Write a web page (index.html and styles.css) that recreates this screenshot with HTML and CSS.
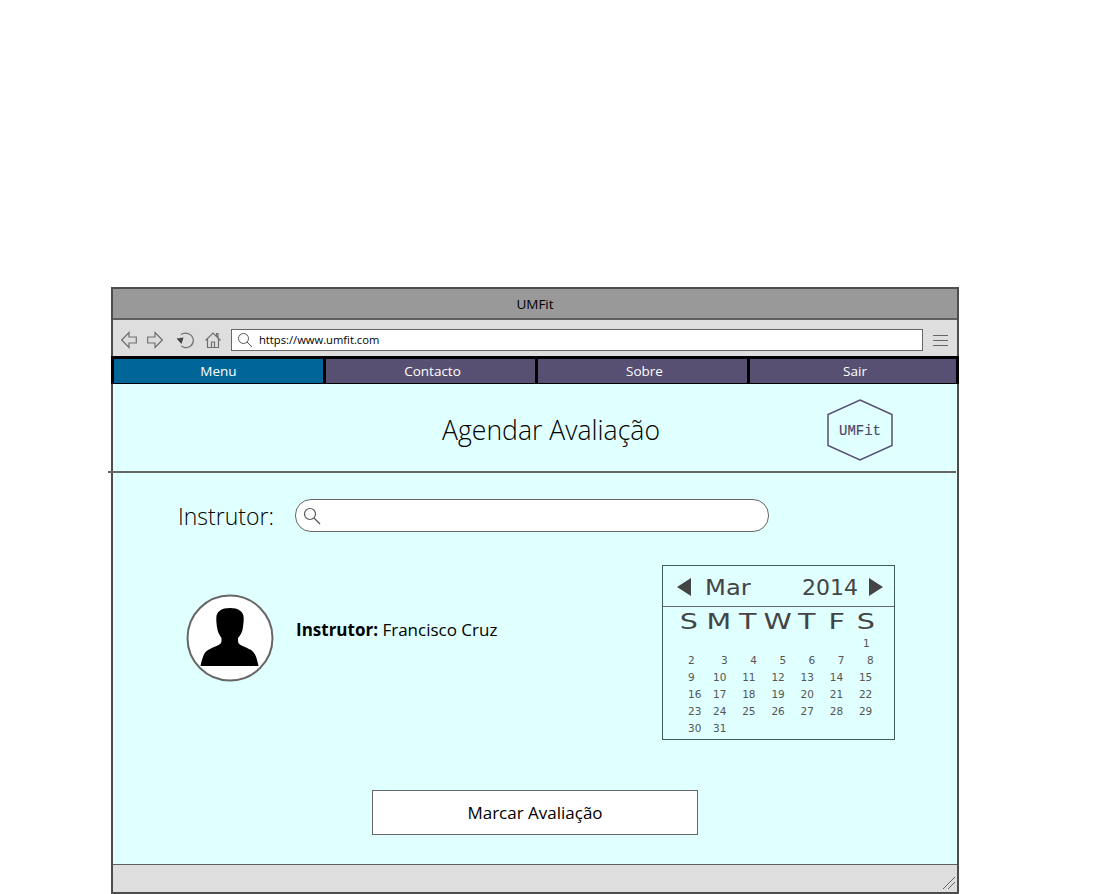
FILE: index.html
```html
<!DOCTYPE html>
<html lang="pt">

<head>
  <meta charset="utf-8" />
  <title>UMFit</title>
  <link rel="stylesheet" href="styles.css">
</head>

<body>
  <div class="window">
    <div class="titlebar">UMFit</div>

    <div class="toolbar">
      <svg class="tool" width="16" height="18" viewBox="0 0 16 18"><path d="M0.700 9 L8 1.500 V6 H15.300 V12 H8 V16.500 Z" /></svg>
      <svg class="tool" width="16" height="18" viewBox="0 0 16 18"><path d="M15.300 9 L8 1.500 V6 H0.700 V12 H8 V16.500 Z" /></svg>
      <svg class="tool reload" width="18" height="18" viewBox="0 0 18 18">
        <path d="M5 3.500 C10 0 17.300 3.500 17.300 9.500 C17.300 14.500 12.500 17.500 8 16.300 C7 16 6 15.500 5.300 14.800" />
        <path class="solid" d="M0.500 7.500 L7.500 6.500 L5.500 13 Z" />
      </svg>
      <svg class="tool" width="16" height="18" viewBox="0 0 16 18">
        <path d="M0.500 9.500 L8 2 L15.500 9.500 M2.500 8 V16.500 H13.500 V8 M6.500 16.500 V11 H9.500 V16.500 M11.500 5 V2.500 H13 V6.500" />
      </svg>
      <div class="address">
        <svg width="16" height="16" viewBox="0 0 16 16"><circle cx="6.500" cy="6.500" r="5" /><path d="M10 10 L15 15" /></svg>
        <span>https://www.umfit.com</span>
      </div>
      <div class="burger"><i></i><i></i><i></i></div>
    </div>

    <nav class="nav">
      <a class="active">Menu</a>
      <a>Contacto</a>
      <a>Sobre</a>
      <a>Sair</a>
    </nav>

    <main class="page">
      <header class="page-head">
        <h1>Agendar Avaliação</h1>
        <div class="logo">
          <svg width="66" height="62" viewBox="0 0 66 62"><path d="M33 1 L65 15.500 V46.500 L33 61 L1 46.500 V15.500 Z" /></svg>
          <span>UMFit</span>
        </div>
      </header>
      <hr class="rule">

      <div class="search-row">
        <label>Instrutor:</label>
        <div class="search">
          <svg width="18" height="18" viewBox="0 0 18 18"><circle cx="7" cy="7" r="5.500" /><path d="M11 11 L17 17" /></svg>
        </div>
      </div>

      <section class="detail">
        <svg class="avatar" width="88" height="88" viewBox="0 0 88 88">
          <circle cx="44" cy="44" r="42.500" />
          <path class="person" d="M44 14 C36 14 30.500 17 30.300 24 C30.200 28 31 33 31 33 C31.500 38 33.500 41 35.500 44 L35.500 47 C35.500 51 30 52 25 54.500 C19 57 17.500 59 14.500 72 L72.500 72 C70 60 68 57 62 54.500 C57 52 52 51 52 47 L52 44 C54.500 41 56.500 38 57 33 C57 33 57.800 28 57.700 24 C57.500 17 52 14 44 14 Z" />
        </svg>
        <p class="name"><b>Instrutor:</b> Francisco Cruz</p>

        <div class="calendar">
          <div class="cal-head">
            <i class="arrow left"></i>
            <span class="month">Mar</span>
            <span class="year">2014</span>
            <i class="arrow right"></i>
          </div>
          <div class="weekdays">
            <span>S</span><span>M</span><span>T</span><span>W</span><span>T</span><span>F</span><span>S</span>
          </div>
          <div class="days">
            <span class="first">1</span>
            <span>2</span><span class="pad">3</span><span class="pad">4</span><span class="pad">5</span><span class="pad">6</span><span class="pad">7</span><span class="pad">8</span>
            <span>9</span><span>10</span><span>11</span><span>12</span><span>13</span><span>14</span><span>15</span>
            <span>16</span><span>17</span><span>18</span><span>19</span><span>20</span><span>21</span><span>22</span>
            <span>23</span><span>24</span><span>25</span><span>26</span><span>27</span><span>28</span><span>29</span>
            <span>30</span><span>31</span>
          </div>
        </div>
      </section>

      <button class="book" type="button">Marcar Avaliação</button>
    </main>

    <footer class="statusbar">
      <svg width="14" height="14" viewBox="0 0 14 14"><path d="M1 13 L13 1 M6 13 L13 6" /></svg>
    </footer>
  </div>
</body>

</html>
```

FILE: styles.css
```css
body {
  margin: 0;
  padding: 287px 0 0 111px;
  background: #fff;
  font-family: "Open Sans", "Noto Sans", sans-serif;
  color: #000;
  overflow: hidden;
}

.window {
  box-sizing: border-box;
  width: 848px;
  height: 607px;
  border: 2px solid #4d4d4d;
  display: flex;
  flex-direction: column;
}

.titlebar {
  box-sizing: border-box;
  height: 31px;
  flex: none;
  line-height: 31px;
  background: #999;
  border-bottom: 2px solid #5f5f5f;
  text-align: center;
  font-size: 13.500px;
}

.toolbar {
  box-sizing: border-box;
  height: 36px;
  flex: none;
  padding-top: 4px;
  background: #dedede;
  display: flex;
  align-items: center;
}

.tool {
  flex: none;
  margin-left: 10px;
}

.tool:first-child {
  margin-left: 8px;
}

.tool path {
  fill: none;
  stroke: #707070;
  stroke-width: 1.200;
}

.reload {
  margin-left: 13px;
  margin-right: 1px;
}

.tool .solid {
  fill: #444;
  stroke: none;
}

.address {
  box-sizing: border-box;
  width: 692px;
  height: 22px;
  margin-left: 10px;
  background: #fff;
  border: 1px solid #666;
  display: flex;
  align-items: center;
  gap: 6px;
  padding-left: 5px;
  font-size: 11.200px;
}

.address span {
  margin-top: -2px;
}

.address path,
.address circle {
  fill: none;
  stroke: #555;
  stroke-width: 1;
}

.burger {
  margin-left: 10px;
  width: 15px;
  display: flex;
  flex-direction: column;
  gap: 4px;
}

.burger i {
  height: 1px;
  background: #666;
}

.nav {
  flex: none;
  height: 28px;
  box-sizing: border-box;
  margin: 0 -2px;
  padding: 3px;
  background: #000;
  display: grid;
  grid-template-columns: 209px 209px 209px 1fr;
  gap: 3px;
}

.nav a {
  background: #575073;
  color: #fff;
  text-align: center;
  font-size: 13.500px;
  line-height: 24px;
}

.nav a + a {
  padding-left: 4px;
}

.nav a.active {
  background: #006699;
}

.page {
  flex: 1;
  background: #e0ffff;
  display: flex;
  flex-direction: column;
}

.page-head {
  height: 87px;
  flex: none;
  box-sizing: border-box;
  padding: 0 64px 0 162px;
  display: flex;
  align-items: center;
}

.page-head h1 {
  flex: 1;
  margin: 0;
  padding-top: 4px;
  text-align: center;
  font-size: 26.600px;
  font-weight: 300;
}

.logo {
  position: relative;
  width: 66px;
  height: 62px;
  margin-top: 4px;
}

.logo svg {
  display: block;
}

.logo path {
  fill: none;
  stroke: #575073;
  stroke-width: 1.500;
}

.logo span {
  position: absolute;
  top: 0;
  left: 0;
  right: 0;
  text-align: center;
  line-height: 65px;
  font-family: "Liberation Mono", monospace;
  font-size: 14px;
  color: #4b4668;
  -webkit-text-stroke: 0.150px #4b4668;
}

.rule {
  flex: none;
  width: 848px;
  height: 2px;
  margin: 0 0 0 -5px;
  border: 0;
  background: #666;
}

.search-row {
  flex: none;
  display: flex;
  align-items: center;
  margin-top: 26px;
  padding-left: 65px;
}

.search-row label {
  width: 117px;
  font-size: 23px;
  font-weight: 300;
  color: #000;
}

.search {
  box-sizing: border-box;
  width: 474px;
  height: 33px;
  background: #fff;
  border: 1px solid #666;
  border-radius: 16px;
  display: flex;
  align-items: center;
  padding-left: 7px;
}

.search circle,
.search path {
  fill: none;
  stroke: #555;
  stroke-width: 1.200;
}

.detail {
  flex: none;
  display: flex;
  align-items: flex-start;
  margin-top: 33px;
  padding-left: 73px;
}

.avatar {
  flex: none;
  margin-top: 29px;
}

.avatar circle {
  fill: #fff;
  stroke: #666;
  stroke-width: 2;
}

.person {
  fill: #000;
}

.name {
  margin: 53px 0 0 22px;
  font-size: 17px;
}

.calendar {
  box-sizing: border-box;
  width: 233px;
  height: 175px;
  margin-left: auto;
  margin-right: 62px;
  border: 1px solid #3f5a5a;
  font-family: "DejaVu Sans", sans-serif;
  color: #444;
}

.cal-head {
  box-sizing: border-box;
  height: 41px;
  border-bottom: 1px solid #667;
  display: flex;
  align-items: center;
  padding: 2px 11px 0 14px;
  font-size: 22px;
}

.month {
  margin-left: 14px;
  transform: scaleX(1.100);
  transform-origin: left center;
}

.year {
  margin-left: auto;
  margin-right: 11px;
}

.arrow {
  width: 0;
  height: 0;
  border-top: 9px solid transparent;
  border-bottom: 9px solid transparent;
}

.arrow.left {
  border-right: 14px solid #444;
}

.arrow.right {
  border-left: 14px solid #444;
}

.weekdays {
  display: grid;
  grid-template-columns: repeat(7, 29.500px);
  padding-left: 11px;
  height: 28px;
  line-height: 30px;
  font-size: 22px;
  text-align: center;
}

.weekdays span {
  transform: scaleX(1.300);
}

.days {
  display: grid;
  grid-template-columns: 25px repeat(6, 29.200px);
  padding-left: 25px;
  grid-auto-rows: 17px;
  line-height: 17px;
  font-size: 10.500px;
  color: #555;
}

.days .first {
  grid-column: 7;
  padding-left: 4px;
}

.days .pad {
  padding-left: 8px;
}

.book {
  flex: none;
  box-sizing: border-box;
  display: block;
  width: 326px;
  height: 45px;
  margin: 50px auto 0;
  background: #fff;
  border: 1px solid #666;
  font-family: inherit;
  font-size: 17px;
  color: #000;
}

.statusbar {
  height: 28px;
  flex: none;
  box-sizing: border-box;
  margin-top: auto;
  background: #dedede;
  border-top: 1px solid #5f5f5f;
  display: flex;
  justify-content: flex-end;
  align-items: flex-end;
  padding: 0 1px 2px 0;
}

.statusbar svg {
  display: block;
}

.statusbar path {
  fill: none;
  stroke: #666;
  stroke-width: 1;
}
```
